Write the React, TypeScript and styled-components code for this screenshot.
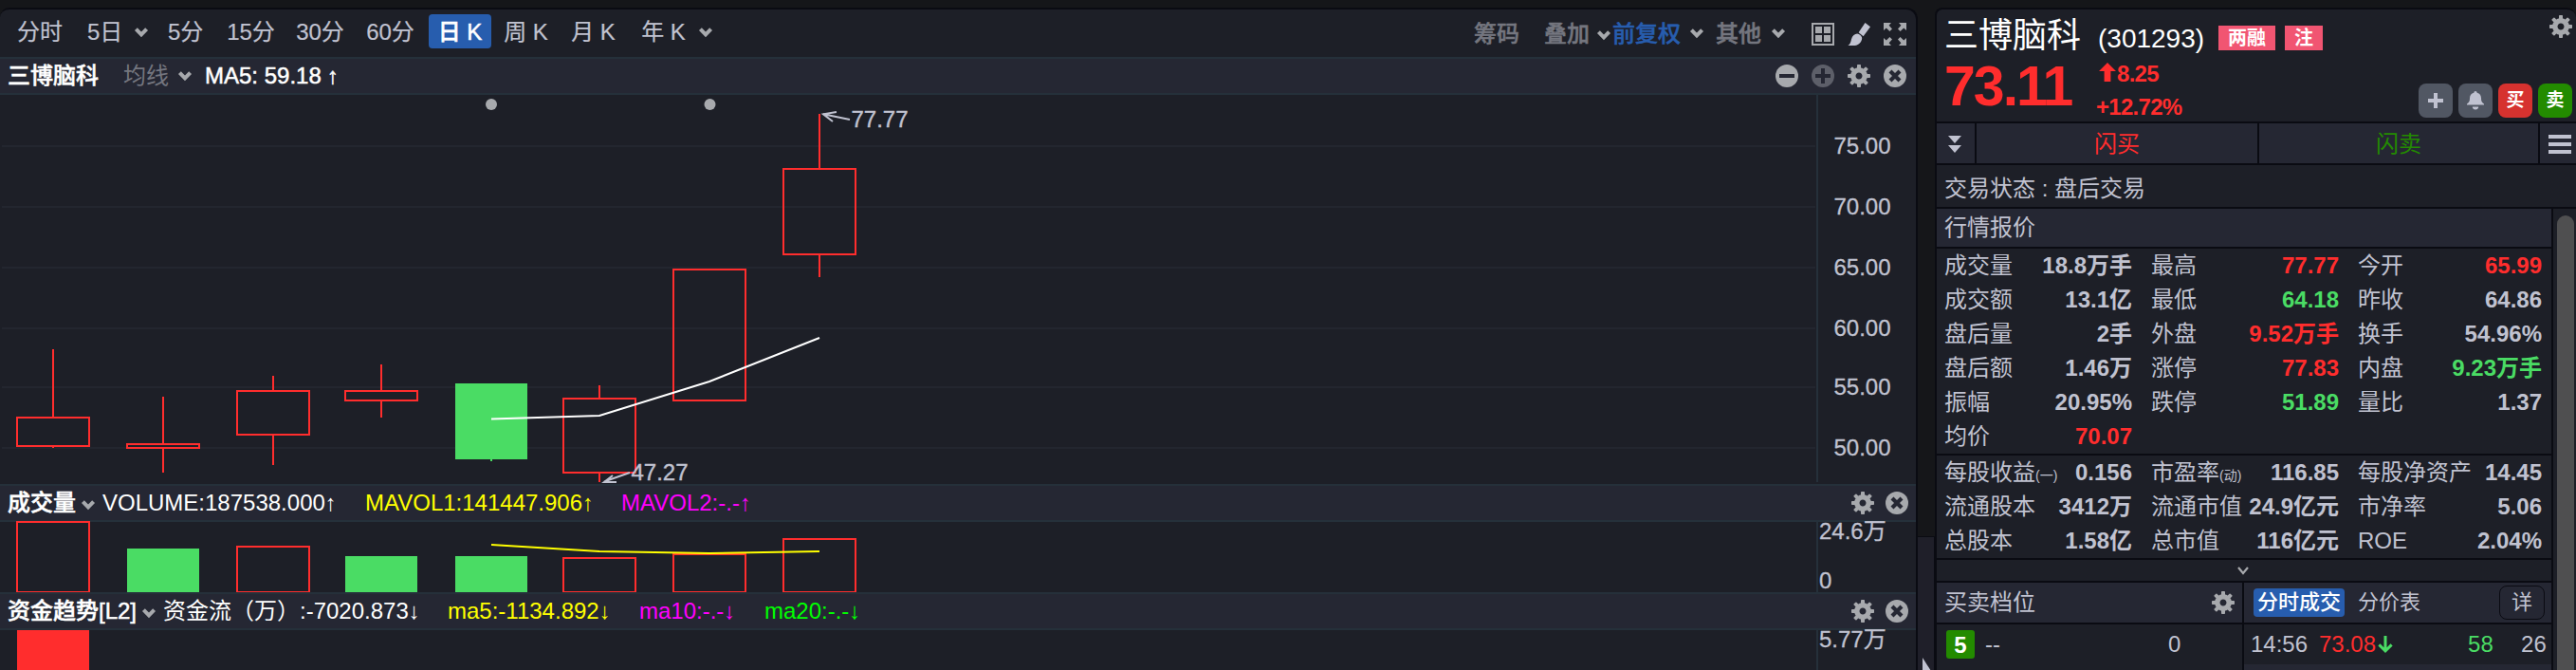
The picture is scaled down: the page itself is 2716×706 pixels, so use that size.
import React from "react";
import styled, { createGlobalStyle } from "styled-components";

const sans = '"Liberation Sans", "Noto Sans CJK SC", sans-serif';

const C = {
  page: "#151619",
  panel: "#1d1f27",
  bar: "#252733",
  edge: "#0a0b12",
  rule: "#25303a",
  grid: "#23262f",
  text: "#c0c2d0",
  dim: "#74767f",
  icon: "#a7a9ad",
  red: "#ff2d2d",
  green: "#4adc64",
  deepGreen: "#238b00",
  blue: "#275dae",
  yellow: "#ffff00",
  magenta: "#ff00ff",
  lime: "#00ff00",
};

const GlobalStyle = createGlobalStyle`
  * { box-sizing: border-box; }
  body { margin: 0; background: ${C.page}; overflow: hidden; }
`;

const Page = styled.div`
  display: flex;
  width: 2716px;
  height: 706px;
  padding-top: 8px;
  background: ${C.page};
  font-family: ${sans};
  font-size: 24px;
  line-height: 36px;
  color: ${C.text};
  white-space: pre;
  overflow: hidden;
`;

/* ---------- chart panel ---------- */

const ChartPanel = styled.section`
  display: flex;
  flex-direction: column;
  flex: none;
  width: 2022px;
  height: 698px;
  border: solid ${C.edge};
  border-width: 2px 2px 0 0;
  border-radius: 10px 12px 0 0;
  background: ${C.panel};
  overflow: hidden;
`;

const Toolbar = styled.div`
  display: flex;
  align-items: center;
  height: 50px;
  padding: 0 10px 4px 18px;
`;

const IndicatorBar = styled.div<{ $right?: number }>`
  display: flex;
  align-items: center;
  flex: none;
  height: 40px;
  padding: 0 ${(p) => p.$right ?? 8}px 0 8px;
  background: ${C.bar};
  border: solid ${C.rule};
  border-width: 2px 0;
`;

const Label = styled.span<{
  $w?: number;
  $ml?: number;
  $mt?: number;
  $color?: string;
  $medium?: boolean;
}>`
  flex: none;
  width: ${(p) => (p.$w ? `${p.$w}px` : "auto")};
  margin-left: ${(p) => p.$ml ?? 0}px;
  margin-top: ${(p) => p.$mt ?? 0}px;
  color: ${(p) => p.$color ?? C.text};
  font-weight: ${(p) => (p.$medium ? 500 : 400)};
  -webkit-text-stroke: ${(p) => (p.$medium ? "0.5px" : "0")};
`;

const Period = styled.button<{ $active?: boolean; $ml: number; $w: number }>`
  flex: none;
  height: 36px;
  width: ${(p) => p.$w}px;
  margin-left: ${(p) => p.$ml}px;
  padding: 1px 0 0;
  border: 0;
  border-radius: 4px;
  background: ${(p) => (p.$active ? C.blue : "transparent")};
  color: ${(p) => (p.$active ? "#ffffff" : C.text)};
  font: ${(p) => (p.$active ? 500 : 400)} 24px/35px ${sans};
  -webkit-text-stroke: ${(p) => (p.$active ? "0.5px" : "0.2px")};
  text-align: center;
  white-space: pre;
`;

const Spacer = styled.div`
  flex: 1;
`;

const Icon = styled.svg<{ $ml?: number; $mt?: number; $mr?: number }>`
  display: block;
  flex: none;
  margin-left: ${(p) => p.$ml ?? 0}px;
  margin-top: ${(p) => p.$mt ?? 0}px;
  margin-right: ${(p) => p.$mr ?? 0}px;
  overflow: visible;
`;

const Chart = styled.svg`
  display: block;
  flex: none;
  font-family: ${sans};
  font-size: 24px;
  overflow: visible;
`;

const Chevron = ({ ml, mt }: { ml: number; mt?: number }) => (
  <Icon $ml={ml} $mt={mt} width="16" height="12" viewBox="0 0 16 12">
    <path d="M2.4 2.6 L8 8.4 L13.6 2.6" fill="none" stroke={C.icon} strokeWidth="4" />
  </Icon>
);

const Gear = ({ ml }: { ml?: number }) => (
  <Icon $ml={ml} width="24" height="24" viewBox="-12 -12 24 24">
    <circle r="6.2" fill="none" stroke={C.icon} strokeWidth="5.4" />
    {[0, 45, 90, 135, 180, 225, 270, 315].map((a) => (
      <rect
        key={a}
        x="-2"
        y="-12"
        width="4"
        height="5.5"
        rx="0.8"
        fill={C.icon}
        transform={`rotate(${a})`}
      />
    ))}
  </Icon>
);

const Round = ({ kind, ml }: { kind: "minus" | "plus" | "close"; ml?: number }) => (
  <Icon $ml={ml} width="24" height="24" viewBox="-12 -12 24 24">
    <circle r="12" fill={kind === "plus" ? "#5d5f69" : C.icon} />
    {kind === "close" ? (
      <path d="M-5 -5 L5 5 M5 -5 L-5 5" stroke={C.bar} strokeWidth="4.2" />
    ) : (
      <path
        d={kind === "plus" ? "M-8 0 H8 M0 -8 V8" : "M-8 0 H8"}
        stroke={C.bar}
        strokeWidth="4"
      />
    )}
  </Icon>
);

const LayoutIcon = ({ ml }: { ml: number }) => (
  <Icon $ml={ml} $mt={6} width="24" height="24" viewBox="0 0 24 24">
    <rect x="1" y="1" width="22" height="22" fill="none" stroke={C.icon} strokeWidth="2" />
    <path d="M4 4h7v7h-7z M13 4h7v7h-7z M4 13h7v7h-7z M13 13h7v7h-7z" fill={C.icon} />
  </Icon>
);

const BrushIcon = ({ ml }: { ml: number }) => (
  <Icon $ml={ml} $mt={6} width="24" height="24" viewBox="0 0 24 24">
    <path d="M18.5 0 L24 4.2 L16.6 14.2 L11.6 10.2 Z" fill={C.text} />
    <path
      d="M10.2 11.6 C12.4 11.8 15 14 15.2 16.2 C14.8 20 12.4 23.4 7.6 24 L0.4 24 C3 22.4 3.4 20 4 17.2 C5 13.6 7.6 11.8 10.2 11.6 Z"
      fill={C.text}
    />
  </Icon>
);

const ExpandIcon = ({ ml }: { ml: number }) => (
  <Icon $ml={ml} $mt={6} width="24" height="24" viewBox="-12 -12 24 24">
    {[0, 90, 180, 270].map((a) => (
      <path
        key={a}
        d="M-12 -12 H-4 L-6.4 -9.2 L-3 -5.6 L-5.6 -3 L-9.2 -6.4 L-12 -4 Z"
        fill={C.icon}
        transform={`rotate(${a})`}
      />
    ))}
  </Icon>
);

type Candle = {
  x: number;
  top: number;
  bottom: number;
  high?: number;
  low?: number;
  down?: boolean;
};

const candles: Candle[] = [
  { x: 56, high: 368, top: 440, bottom: 470, low: 472 },
  { x: 172, high: 418, top: 468, bottom: 472, low: 498 },
  { x: 288, high: 396, top: 412, bottom: 458, low: 490 },
  { x: 402, high: 384, top: 412, bottom: 422, low: 440 },
  { x: 518, top: 404, bottom: 484, low: 486, down: true },
  { x: 632, high: 406, top: 420, bottom: 498, low: 508 },
  { x: 748, top: 284, bottom: 422 },
  { x: 864, high: 120, top: 178, bottom: 268, low: 292 },
];

const volumes: Candle[] = [
  { x: 56, top: 550, bottom: 624 },
  { x: 172, top: 578, bottom: 624, down: true },
  { x: 288, top: 576, bottom: 624 },
  { x: 402, top: 586, bottom: 624, down: true },
  { x: 518, top: 586, bottom: 624, down: true },
  { x: 632, top: 588, bottom: 624 },
  { x: 748, top: 584, bottom: 624 },
  { x: 864, top: 568, bottom: 624 },
];

const Bar = ({ x, top, bottom, high, low, down }: Candle) => {
  const color = down ? C.green : C.red;
  return (
    <g stroke={color} strokeWidth="2" fill="none">
      {high !== undefined && <path d={`M${x} ${high}V${top}`} />}
      {low !== undefined && <path d={`M${x} ${bottom}V${low}`} />}
      <rect
        x={x - 38}
        y={top}
        width="76"
        height={bottom - top}
        fill={down ? color : "none"}
        stroke={down ? "none" : color}
      />
    </g>
  );
};

const priceTicks = [
  { y: 154, label: "75.00" },
  { y: 218, label: "70.00" },
  { y: 282, label: "65.00" },
  { y: 346, label: "60.00" },
  { y: 408, label: "55.00" },
  { y: 472, label: "50.00" },
];

const PriceChart = () => (
  <Chart width="2020" height="410" viewBox="0 100 2020 410">
    <g stroke={C.grid} strokeWidth="2">
      {priceTicks.map((t) => (
        <path key={t.y} d={`M2 ${t.y}H1914`} />
      ))}
    </g>
    <path d="M1916 100V508" stroke={C.rule} strokeWidth="2" />
    {priceTicks.map((t) => (
      <text key={t.y} x="1933.5" y={t.y + 8.3} fill={C.text} stroke={C.text} strokeWidth="0.3">
        {t.label}
      </text>
    ))}
    <circle cx="518" cy="110" r="6" fill={C.icon} />
    <circle cx="748.5" cy="110" r="6" fill={C.icon} />
    {candles.map((c) => (
      <Bar key={c.x} {...c} />
    ))}
    <path d="M518 441.5L632 438L748 402L864 356" fill="none" stroke="#fff" strokeWidth="2" />
    <path
      d="M896 126L868 120.3M882 118L868 120.3L878 128"
      fill="none"
      stroke={C.text}
      strokeWidth="2"
    />
    <text x="897.5" y="134" fill={C.text} stroke={C.text} strokeWidth="0.4">77.77</text>
    <path
      d="M664 498L637 507.5M646 501L637 508H650"
      fill="none"
      stroke={C.text}
      strokeWidth="2"
    />
    <text x="665.5" y="506" fill={C.text} stroke={C.text} strokeWidth="0.4">47.27</text>
  </Chart>
);

const VolumeChart = () => (
  <Chart width="2020" height="74" viewBox="0 550 2020 74">
    <path d="M1916 550V624" stroke={C.rule} strokeWidth="2" />
    <g fill={C.text} stroke={C.text} strokeWidth="0.3">
      <text x="1918" y="568">24.6万</text>
      <text x="1918" y="620">0</text>
    </g>
    {volumes.map((v) => (
      <Bar key={v.x} {...v} />
    ))}
    <path d="M518 574L632 581L748 583L864 581" fill="none" stroke={C.yellow} strokeWidth="2" />
  </Chart>
);

const MoneyChart = () => (
  <Chart width="2020" height="42" viewBox="0 664 2020 42">
    <path d="M1916 664V706" stroke={C.rule} strokeWidth="2" />
    <text x="1918" y="682" fill={C.text} stroke={C.text} strokeWidth="0.3">5.77万</text>
    <rect x="18" y="664" width="76" height="42" fill={C.red} />
  </Chart>
);

/* ---------- splitter ---------- */

const Splitter = styled.div`
  display: flex;
  flex-direction: column;
  flex: none;
  width: 18px;
  padding-top: 557px;
`;

const SplitterHandle = styled.div`
  flex: 1;
  border: solid ${C.edge};
  border-width: 1px 1px 0 0;
  background: #1f1f29;
  overflow: hidden;
`;

/* ---------- quote panel ---------- */

const QuotePanel = styled.section`
  flex: none;
  width: 676px;
  height: 698px;
  border: solid ${C.edge};
  border-width: 2px 0 0 2px;
  border-radius: 8px 10px 0 0;
  background: ${C.panel};
  overflow: hidden;
`;

const QuoteHead = styled.header`
  display: flex;
  justify-content: space-between;
  height: 118px;
  padding: 6px 4px 0 8px;
`;

const HeadMain = styled.div`
  display: flex;
  flex-direction: column;
`;

const TitleRow = styled.div`
  display: flex;
  height: 44px;
  color: #fff;
`;

const StockName = styled.span`
  width: 162px;
  font-size: 36px;
  line-height: 44px;
`;

const StockCode = styled.span`
  width: 127px;
  font-size: 28px;
  line-height: 50px;
`;

const Tag = styled.span`
  height: 26px;
  margin: 11px 10px 0 0;
  padding: 0 10px;
  background: #f15572;
  font-size: 20px;
  font-weight: 700;
  line-height: 26px;
`;

const PriceRow = styled.div`
  display: flex;
  color: ${C.red};
  font-weight: 700;
`;

const Price = styled.span`
  width: 160px;
  font-size: 59px;
  line-height: 63px;
  letter-spacing: -2px;
`;

const Change = styled.div`
  display: flex;
  flex-direction: column;
`;

const ChangeLine = styled.div`
  display: flex;
  align-items: center;
  height: 35px;
  letter-spacing: -0.7px;
`;

const HeadSide = styled.div`
  display: flex;
  flex-direction: column;
  align-items: flex-end;
  justify-content: space-between;
  padding-bottom: 4px;
`;

const Actions = styled.div`
  display: flex;
  gap: 6px;
`;

const Action = styled.button<{ $bg: string }>`
  display: flex;
  align-items: center;
  justify-content: center;
  width: 36px;
  height: 36px;
  padding: 0;
  border: 0;
  border-radius: 8px;
  background: ${(p) => p.$bg};
  color: #fff;
  font: 700 19px/36px ${sans};
`;

const FlashRow = styled.div`
  display: grid;
  grid-template-columns: 40px 296px 294px 38px;
  gap: 2px;
  height: 46px;
  border: solid ${C.edge};
  border-width: 2px 0;
  background: ${C.edge};
`;

const FlashCell = styled.div<{ $color?: string }>`
  display: flex;
  align-items: center;
  justify-content: center;
  padding-top: 1px;
  background: ${C.bar};
  color: ${(p) => p.$color ?? C.text};
`;

const StatusRow = styled.div`
  height: 46px;
  padding: 7px 8px 0;
  border-bottom: 2px solid ${C.edge};
`;

const Body = styled.div`
  display: flex;
`;

const Content = styled.div`
  flex: none;
  width: 650px;
  height: 488px;
  border-right: 2px solid ${C.edge};
`;

const ScrollTrack = styled.div`
  padding: 7px 0 0 4px;
`;

const ScrollThumb = styled.div`
  width: 18px;
  height: 520px;
  border-radius: 9px;
  background: #4f4f50;
`;

const SectionTitle = styled.div`
  height: 42px;
  padding: 2px 8px 0;
  border-bottom: 2px solid ${C.edge};
  background: ${C.bar};
`;

const Quotes = styled.div`
  display: grid;
  grid-template-columns: 198px 198px 194px;
  grid-auto-rows: 36px;
  column-gap: 20px;
  padding-left: 8px;
  border-bottom: 2px solid ${C.edge};
`;

const Cell = styled.div`
  display: flex;
  justify-content: space-between;
`;

const Value = styled.span<{ $color?: string }>`
  color: ${(p) => p.$color ?? C.text};
  font-weight: 700;
`;

const Small = styled.small`
  font-size: 14px;
`;

const ExpandRow = styled.div`
  display: flex;
  align-items: center;
  justify-content: center;
  height: 24px;
  padding-right: 2px;
  border-bottom: 2px solid ${C.edge};
`;

const Halves = styled.div`
  display: grid;
  grid-template-columns: 322px 324px;
  column-gap: 2px;
  background: ${C.edge};
`;

const Half = styled.div`
  background: ${C.panel};
`;

const HalfHead = styled.div<{ $right?: number }>`
  display: flex;
  align-items: center;
  height: 44px;
  padding: 0 ${(p) => p.$right ?? 8}px 0 8px;
  border-bottom: 2px solid ${C.edge};
  background: ${C.bar};
`;

const TabPill = styled.span`
  width: 96px;
  height: 30px;
  border-radius: 4px;
  margin-left: 2px;
  background: ${C.blue};
  color: #fff;
  font-size: 22px;
  font-weight: 500;
  line-height: 29px;
  text-align: center;
`;

const Tab = styled.span`
  margin-left: 14px;
  font-size: 22px;
  line-height: 30px;
`;

const Detail = styled.button`
  width: 48px;
  height: 36px;
  padding: 0;
  border: 1px solid ${C.edge};
  border-radius: 8px;
  background: transparent;
  color: ${C.text};
  font: 22px/34px ${sans};
`;

const Tick = styled.div`
  display: flex;
  align-items: center;
  height: 42px;
  padding-left: 7px;
`;

const NextTick = styled.div`
  height: 8px;
  background: ${C.bar};
`;

const Level = styled.span`
  width: 30px;
  height: 30px;
  margin: 0 11px 0 3px;
  border-radius: 3px;
  background: ${C.deepGreen};
  color: #fff;
  font-weight: 700;
  line-height: 31px;
  text-align: center;
`;

type Quote = { label: string; note?: string; value: string; color?: string };

const quotes: Quote[] = [
  { label: "成交量", value: "18.8万手" },
  { label: "最高", value: "77.77", color: C.red },
  { label: "今开", value: "65.99", color: C.red },
  { label: "成交额", value: "13.1亿" },
  { label: "最低", value: "64.18", color: C.green },
  { label: "昨收", value: "64.86" },
  { label: "盘后量", value: "2手" },
  { label: "外盘", value: "9.52万手", color: C.red },
  { label: "换手", value: "54.96%" },
  { label: "盘后额", value: "1.46万" },
  { label: "涨停", value: "77.83", color: C.red },
  { label: "内盘", value: "9.23万手", color: C.green },
  { label: "振幅", value: "20.95%" },
  { label: "跌停", value: "51.89", color: C.green },
  { label: "量比", value: "1.37" },
  { label: "均价", value: "70.07", color: C.red },
];

const fundamentals: Quote[] = [
  { label: "每股收益", note: "(一)", value: "0.156" },
  { label: "市盈率", note: "(动)", value: "116.85" },
  { label: "每股净资产", value: "14.45" },
  { label: "流通股本", value: "3412万" },
  { label: "流通市值", value: "24.9亿元" },
  { label: "市净率", value: "5.06" },
  { label: "总股本", value: "1.58亿" },
  { label: "总市值", value: "116亿元" },
  { label: "ROE", value: "2.04%" },
];

const QuoteGrid = ({ items }: { items: Quote[] }) => (
  <Quotes>
    {items.map((q) => (
      <Cell key={q.label}>
        <span>
          {q.label}
          {q.note && <Small>{q.note}</Small>}
        </span>
        <Value $color={q.color}>{q.value}</Value>
      </Cell>
    ))}
  </Quotes>
);

export default function App() {
  return (
    <>
      <GlobalStyle />
      <Page>
        <ChartPanel>
          <Toolbar>
            <Period $ml={0} $w={48}>分时</Period>
            <Period $ml={26} $w={37}>5日</Period>
            <Chevron ml={12} mt={2} />
            <Period $ml={20} $w={37}>5分</Period>
            <Period $ml={25} $w={51}>15分</Period>
            <Period $ml={22} $w={51}>30分</Period>
            <Period $ml={23} $w={51}>60分</Period>
            <Period $ml={15} $w={66} $active>日 K</Period>
            <Period $ml={13} $w={47}>周 K</Period>
            <Period $ml={24} $w={47}>月 K</Period>
            <Period $ml={27} $w={47}>年 K</Period>
            <Chevron ml={13} mt={2} />
            <Spacer />
            <Label $w={48} $mt={5} $color={C.dim} $medium>筹码</Label>
            <Label $ml={26} $mt={5} $w={48} $color={C.dim} $medium>叠加</Label>
            <Chevron ml={7} mt={8} />
            <Label $ml={1} $mt={5} $w={72} $color={C.blue} $medium>前复权</Label>
            <Chevron ml={9} mt={3} />
            <Label $ml={12} $mt={5} $w={48} $color={C.dim} $medium>其他</Label>
            <Chevron ml={10} mt={3} />
            <LayoutIcon ml={27} />
            <BrushIcon ml={14} />
            <ExpandIcon ml={14} />
          </Toolbar>
          <IndicatorBar $right={10}>
            <Label $w={96} $color="#fff" $medium>三博脑科</Label>
            <Label $ml={26} $w={48} $color={C.dim}>均线</Label>
            <Chevron ml={9} />
            <Label $ml={13} $w={129} $color="#fff" $medium>MA5: 59.18</Label>
            <Label $color="#fff" $medium>↑</Label>
            <Spacer />
            <Round kind="minus" />
            <Round kind="plus" ml={14} />
            <Gear ml={14} />
            <Round kind="close" ml={14} />
          </IndicatorBar>
          <PriceChart />
          <IndicatorBar>
            <Label $w={72} $color="#fff" $medium>成交量</Label>
            <Chevron ml={5} mt={4} />
            <Label $ml={7} $w={277} $color="#fff">VOLUME:187538.000↑</Label>
            <Label $w={270} $color={C.yellow}>MAVOL1:141447.906↑</Label>
            <Label $color={C.magenta}>MAVOL2:-.-↑</Label>
            <Spacer />
            <Gear />
            <Round kind="close" ml={12} />
          </IndicatorBar>
          <VolumeChart />
          <IndicatorBar>
            <Label $w={136} $color="#fff" $medium>资金趋势[L2]</Label>
            <Chevron ml={5} mt={4} />
            <Label $ml={7} $w={300} $color="#fff">资金流（万）:-7020.873↓</Label>
            <Label $w={202} $color={C.yellow}>ma5:-1134.892↓</Label>
            <Label $w={132} $color={C.magenta}>ma10:-.-↓</Label>
            <Label $color={C.lime}>ma20:-.-↓</Label>
            <Spacer />
            <Gear />
            <Round kind="close" ml={12} />
          </IndicatorBar>
          <MoneyChart />
        </ChartPanel>

        <Splitter>
          <SplitterHandle>
            <svg width="16" height="140" viewBox="0 0 16 140">
              <path d="M5 127L14 141H5Z" fill={C.text} />
            </svg>
          </SplitterHandle>
        </Splitter>

        <QuotePanel>
          <QuoteHead>
            <HeadMain>
              <TitleRow>
                <StockName>三博脑科</StockName>
                <StockCode>(301293)</StockCode>
                <Tag>两融</Tag>
                <Tag>注</Tag>
              </TitleRow>
              <PriceRow>
                <Price>73.11</Price>
                <Change>
                  <ChangeLine>
                    <Icon $ml={3} $mt={-4} $mr={1} width="18" height="20" viewBox="0 0 18 20">
                      <path d="M9 0L18 9H12.4V20H5.6V9H0Z" fill={C.red} />
                    </Icon>
                    8.25
                  </ChangeLine>
                  <ChangeLine>+12.72%</ChangeLine>
                </Change>
              </PriceRow>
            </HeadMain>
            <HeadSide>
              <Gear />
              <Actions>
                <Action $bg="#515763">
                  <Icon width="16" height="16" viewBox="0 0 16 16">
                    <path d="M8 0V16M0 8H16" stroke={C.text} strokeWidth="4" />
                  </Icon>
                </Action>
                <Action $bg="#515763">
                  <Icon width="18" height="20" viewBox="0 0 18 20">
                    <path
                      d="M9 0C10 0 10.6 0.8 10.6 1.8C13.6 2.4 15 4.6 15 7.4C15 10.4 15.6 11.6 18 13.4V14.6H0V13.4C2.4 11.6 3 10.4 3 7.4C3 4.6 4.4 2.4 7.4 1.8C7.4 0.8 8 0 9 0Z"
                      fill={C.text}
                    />
                    <path d="M5.8 16.6H12.2A3.2 2.8 0 0 1 5.8 16.6Z" fill={C.text} />
                  </Icon>
                </Action>
                <Action $bg="#d6322f">买</Action>
                <Action $bg={C.deepGreen}>卖</Action>
              </Actions>
            </HeadSide>
          </QuoteHead>

          <FlashRow>
            <FlashCell>
              <Icon $ml={-2} width="14" height="18" viewBox="0 0 14 18">
                <path d="M0 0H14L7 8Z M0 10H14L7 18Z" fill={C.text} />
              </Icon>
            </FlashCell>
            <FlashCell $color={C.red}>闪买</FlashCell>
            <FlashCell $color={C.deepGreen}>闪卖</FlashCell>
            <FlashCell>
              <Icon $ml={4} width="24" height="20" viewBox="0 0 24 20">
                <path d="M0 2H24M0 10H24M0 18H24" stroke={C.text} strokeWidth="4" />
              </Icon>
            </FlashCell>
          </FlashRow>

          <StatusRow>交易状态 : 盘后交易</StatusRow>

          <Body>
            <Content>
              <SectionTitle>行情报价</SectionTitle>
              <QuoteGrid items={quotes} />
              <QuoteGrid items={fundamentals} />
              <ExpandRow>
                <Icon width="12" height="9" viewBox="0 0 12 9">
                  <path d="M1 1L6 7L11 1" fill="none" stroke={C.icon} strokeWidth="2.2" />
                </Icon>
              </ExpandRow>
              <Halves>
                <Half>
                  <HalfHead>
                    买卖档位
                    <Spacer />
                    <Gear />
                  </HalfHead>
                  <Tick>
                    <Level>5</Level>
                    <Label $w={193}>--</Label>
                    <Label>0</Label>
                  </Tick>
                </Half>
                <Half>
                  <HalfHead $right={7}>
                    <TabPill>分时成交</TabPill>
                    <Tab>分价表</Tab>
                    <Spacer />
                    <Detail>详</Detail>
                  </HalfHead>
                  <Tick>
                    <Label $w={72}>14:56</Label>
                    <Label $color={C.red}>73.08</Label>
                    <Icon $ml={2} width="16" height="18" viewBox="0 0 16 18">
                      <path
                        d="M8 0V16M1.4 9.4L8 16L14.6 9.4"
                        fill="none"
                        stroke={C.green}
                        strokeWidth="3"
                      />
                    </Icon>
                    <Label $ml={79} $w={56} $color={C.green}>58</Label>
                    <Label>26</Label>
                  </Tick>
                  <NextTick />
                </Half>
              </Halves>
            </Content>
            <ScrollTrack>
              <ScrollThumb />
            </ScrollTrack>
          </Body>
        </QuotePanel>
      </Page>
    </>
  );
}
